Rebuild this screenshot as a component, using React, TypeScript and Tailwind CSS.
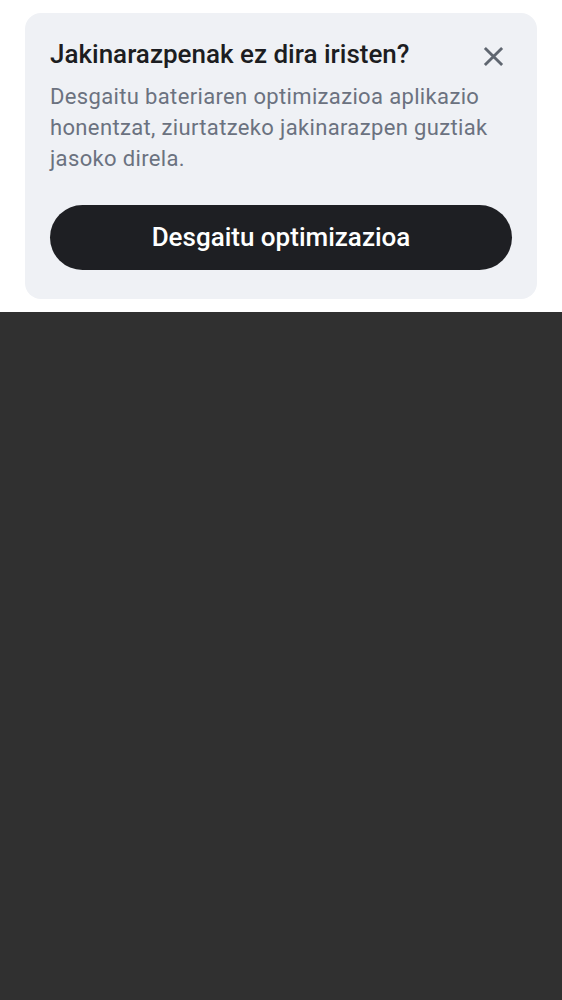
export default function App() {
  return (
    <div className="w-[562px] h-[1000px] flex flex-col bg-white" style={{ fontFamily: "Roboto, 'Noto Sans', sans-serif" }}>
      <div className="px-[25px] pt-[13px] pb-[13px]">
        <div className="bg-[#eff1f5] rounded-[16px] px-[25px] pt-[25px] pb-[29px]">
          <div className="flex items-start justify-between">
            <h2 className="text-[26px] leading-[32px] font-medium text-[#1c1d21]">Jakinarazpenak ez dira iristen?</h2>
            <button className="w-[36px] h-[36px] flex items-center justify-center mr-[1px]">
              <svg width="21" height="21" viewBox="0 0 22 22" fill="none" stroke="#5f6670" strokeWidth="3" strokeLinecap="butt">
                <path d="M2 2 L20 20 M20 2 L2 20" />
              </svg>
            </button>
          </div>
          <p className="mt-[7px] text-[22px] leading-[31px] tracking-[0.35px] text-[#6b7280]">
            Desgaitu bateriaren optimizazioa aplikazio honentzat, ziurtatzeko jakinarazpen guztiak jasoko direla.
          </p>
          <button className="mt-[31px] w-full h-[65px] rounded-full bg-[#1e1f23] text-white text-[26px] font-medium">
            Desgaitu optimizazioa
          </button>
        </div>
      </div>
      <div className="flex-1 bg-[#303030]" />
    </div>
  );
}
